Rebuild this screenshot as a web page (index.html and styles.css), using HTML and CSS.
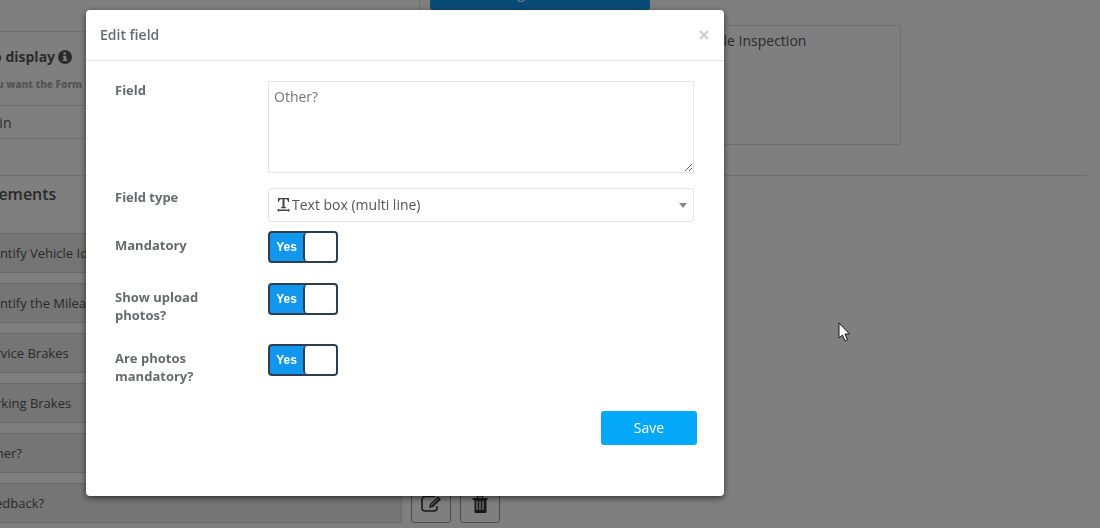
FILE: index.html
```
<!DOCTYPE html>
<html lang="en">
<head>
  <meta charset="UTF-8">
  <meta name="viewport" content="width=device-width, initial-scale=1.0">
  <title>Edit field</title>
  <link rel="stylesheet" href="styles.css">
</head>
<body>
  <div class="page">
    <div class="top-row">
      <div class="left-col">
        <div class="preview-box"></div>
        <label class="display-label" for="display">To display
          <svg class="info" viewBox="0 0 14 14"><circle cx="7" cy="7" r="7"/><path d="M5.5 2.5h2.6v2H5.5zM5 5.8h3.2v3.6h1.2V11H4.8V9.4h1.1v-2H5z" fill="#fff"/></svg>
        </label>
        <p class="help">You want the Form to be shown</p>
        <input class="display-input" id="display" type="text" value="Main">
      </div>
      <div class="right-col">
        <button class="change-btn" type="button">Change form title</button>
        <textarea class="title-text" aria-label="Form title">This is the title used for the Vehicle Inspection</textarea>
      </div>
    </div>
    <section class="elements">
      <h2>Elements</h2>
      <div class="element"><div class="element-name">Identify Vehicle Identification</div></div>
      <div class="element"><div class="element-name">Identify the Mileage</div></div>
      <div class="element"><div class="element-name">Service Brakes</div></div>
      <div class="element"><div class="element-name">Parking Brakes</div></div>
      <div class="element"><div class="element-name">Other?</div></div>
      <div class="element">
        <div class="element-name">Feedback?</div>
        <button class="icon-btn" type="button" aria-label="Edit">
          <svg viewBox="0 0 20 18"><path d="M14 1.500H4A3 3 0 0 0 1 4.500V13a3 3 0 0 0 3 3h9a3 3 0 0 0 3-3v-2" fill="none" stroke="#333" stroke-width="1.600"/><path d="M8 13l1-4 8-7.500 3 3L12 12z"/><path d="M10 10.500l7-6.500" stroke="#fff" stroke-width="1"/></svg>
        </button>
        <button class="icon-btn" type="button" aria-label="Delete">
          <svg viewBox="0 0 20 18"><path d="M2.500 3h4l1-3h5l1 3h4v2h-1v11.500q0 1.500-1.500 1.500h-9q-1.500 0-1.500-1.500V5h-2zM8 3h4l-.5-1.500h-3z" fill-rule="evenodd"/><path d="M7 6v9M10 6v9M13 6v9" stroke="#fff" stroke-width="1.200"/></svg>
        </button>
      </div>
    </section>
  </div>

  <div class="backdrop">
    <form class="modal" role="dialog" aria-labelledby="modalTitle">
      <div class="modal-header">
        <h1 id="modalTitle">Edit field</h1>
        <button class="close" type="button" aria-label="Close">
          <svg viewBox="0 0 10 10"><path d="M1 1l8 8M9 1L1 9"/></svg>
        </button>
      </div>
      <div class="modal-body">
        <div class="row row-text">
          <label class="name" for="field">Field</label>
          <textarea id="field" class="field" placeholder="Other?"></textarea>
        </div>
        <div class="row row-type">
          <label class="name" for="type">Field type</label>
          <div class="select">
            <svg class="type-icon" viewBox="0 0 13 14"><path d="M1 0h11v4h-1q-.2-2.500-1.500-2.700H7.500V8.500q0 .8 1.500 .8v.9H4v-.9q1.500 0 1.500-.8V1.300H3.500Q2.200 1.500 2 4H1z"/><path d="M2 11.500h9v-1l2 1.700-2 1.800v-1H2v1l-2-1.800 2-1.700z"/></svg>
            <select id="type">
              <option>Text box (multi line)</option>
              <option>Text box (single line)</option>
            </select>
            <svg class="caret" viewBox="0 0 8 5"><path d="M0 0h8L4 5z"/></svg>
          </div>
        </div>
        <div class="row row-switch">
          <label class="name" for="mandatory">Mandatory</label>
          <div class="switch">
            <input id="mandatory" type="checkbox" checked>
            <span class="yes">Yes</span><span class="knob"></span>
          </div>
        </div>
        <div class="row row-switch">
          <label class="name" for="upload">Show upload photos?</label>
          <div class="switch">
            <input id="upload" type="checkbox" checked>
            <span class="yes">Yes</span><span class="knob"></span>
          </div>
        </div>
        <div class="row row-switch">
          <label class="name" for="photos">Are photos mandatory?</label>
          <div class="switch">
            <input id="photos" type="checkbox" checked>
            <span class="yes">Yes</span><span class="knob"></span>
          </div>
        </div>
        <div class="actions">
          <button class="save" type="submit">Save</button>
        </div>
      </div>
    </form>
  </div>

  <svg class="pointer" viewBox="0 0 12 20"><path d="M1 1v15l3.500-3 2.500 6 2.500-1-2.500-6h4.500z"/></svg>
</body>
</html>
```
FILE: styles.css
```
* {
  box-sizing: border-box;
}
body {
  margin: 0;
  height: 100vh;
  overflow: hidden;
  font-family: "Open Sans", Arial, sans-serif;
  font-size: 14px;
  line-height: 20px;
  color: #676a6c;
  background: #fff;
}
button, input, select, textarea {
  font: inherit;
  color: inherit;
}

/* page behind the dialog */
.page {
  margin: -24px 13px 0 -20px;
  color: #555;
}
.top-row {
  display: flex;
  gap: 10px;
  height: 200px;
  border-bottom: 1px solid #e0e0e0;
}
.left-col {
  width: 440px;
}
.preview-box {
  height: 56px;
  border: 1px solid #e0e0e0;
}
.display-label {
  display: flex;
  align-items: center;
  gap: 3px;
  padding: 15px 0 0 5px;
  font-weight: bold;
  color: #555;
}
.info {
  width: 14px;
  height: 14px;
  fill: #555;
}
.help {
  margin: 8px 0 12px 4px;
  font-size: 10px;
  line-height: 18px;
  font-weight: 800;
  color: #aaa;
}
.display-input {
  width: 100%;
  height: 34px;
  padding: 0;
  border: 1px solid #e0e0e0;
  text-indent: -2px;
}
.right-col {
  flex: 1;
  display: flex;
  flex-direction: column;
  gap: 15px;
}
.change-btn {
  width: 220px;
  height: 34px;
  padding: 0;
  border: none;
  border-radius: 3px;
  background: #1297ee;
  color: #fff;
}
.title-text {
  width: 471px;
  height: 120px;
  padding: 5px 20px 5px 77px;
  border: 1px solid #e0e0e0;
  background: #fff;
  resize: none;
}
.elements h2 {
  margin: 8px 0 29px 5px;
  font-size: 16px;
  line-height: 20px;
  font-weight: 600;
}
.element {
  display: flex;
  gap: 9px;
  margin-bottom: 10px;
}
.element-name {
  width: 422px;
  height: 40px;
  line-height: 38px;
  font-size: 13px;
  border: 1px solid #d4d4d4;
  background: #ebebeb;
}
.icon-btn {
  width: 40px;
  height: 40px;
  padding: 0;
  border: 1px solid #999;
  border-radius: 3px;
  background: #fff;
}
.icon-btn svg {
  width: 20px;
  height: 18px;
  vertical-align: middle;
  fill: #333;
}

/* dialog */
.backdrop {
  position: fixed;
  inset: 0;
  padding: 10px 86px;
  background: rgba(0, 0, 0, 0.5);
}
.modal {
  max-width: 638px;
  padding-bottom: 51px;
  border-radius: 4px;
  background: #fff;
  box-shadow: 0 2px 6px rgba(0, 0, 0, 0.6);
}
.modal-header {
  display: flex;
  align-items: center;
  justify-content: space-between;
  padding: 15px 15px 15px 14px;
  border-bottom: 1px solid #e5e5e5;
}
.modal-header h1 {
  margin: 0;
  font-size: 14px;
  line-height: 20px;
  font-weight: 600;
}
.close {
  display: flex;
  padding: 0;
  border: none;
  background: none;
}
.close svg {
  width: 10px;
  height: 10px;
  fill: none;
  stroke: #ccc;
  stroke-width: 2;
}
.modal-body {
  padding: 20px 30px 0 29px;
}
.row {
  display: grid;
  grid-template-columns: 153px 1fr;
  align-items: start;
}
.name {
  padding-right: 50px;
  font-size: 13px;
  line-height: 18px;
  font-weight: bold;
}
.row-text {
  margin-bottom: 15px;
}
.field {
  display: block;
  width: 100%;
  height: 92px;
  padding: 5px;
  border: 1px solid #e5e6e7;
  background: #fff;
  resize: vertical;
}
.field::placeholder {
  color: #757575;
}
.select {
  display: flex;
  align-items: center;
  height: 34px;
  padding: 0 6px 0 8px;
  border: 1px solid #e5e6e7;
  border-radius: 3px;
  color: #555;
}
.select select {
  flex: 1;
  padding: 0 0 0 2px;
  border: none;
  background: none;
  appearance: none;
}
.type-icon {
  width: 13px;
  height: 14px;
  fill: #444;
}
.caret {
  width: 8px;
  height: 5px;
  fill: #888;
}
.row-type {
  margin-bottom: 9px;
}
.row-switch {
  margin-bottom: 20px;
}
.row-switch .name {
  padding-top: 5px;
}
.switch {
  position: relative;
  display: flex;
  width: 70px;
  height: 32px;
  border: 2px solid #2c3e50;
  border-radius: 4px;
  overflow: hidden;
  background: #1297ee;
}
.switch input {
  position: absolute;
  inset: 0;
  width: 100%;
  height: 100%;
  margin: 0;
  opacity: 0;
  cursor: pointer;
}
.yes {
  flex: 1;
  font: bold 12px/28px "Liberation Sans", Arial, sans-serif;
  text-align: center;
  color: #fff;
}
.knob {
  width: 33px;
  border-left: 2px solid #2c3e50;
  border-radius: 4px 0 0 4px;
  background: #fff;
}
.switch input:not(:checked) ~ .yes {
  visibility: hidden;
}
.actions {
  display: flex;
  justify-content: flex-end;
  margin: 26px -3px 0 0;
}
.save {
  width: 96px;
  height: 34px;
  padding: 0;
  border: none;
  border-radius: 3px;
  background: #03a9f8;
  color: #fff;
}
.pointer {
  position: fixed;
  left: 838px;
  top: 322px;
  width: 12px;
  height: 20px;
  fill: #fff;
  stroke: #15151f;
}
```
